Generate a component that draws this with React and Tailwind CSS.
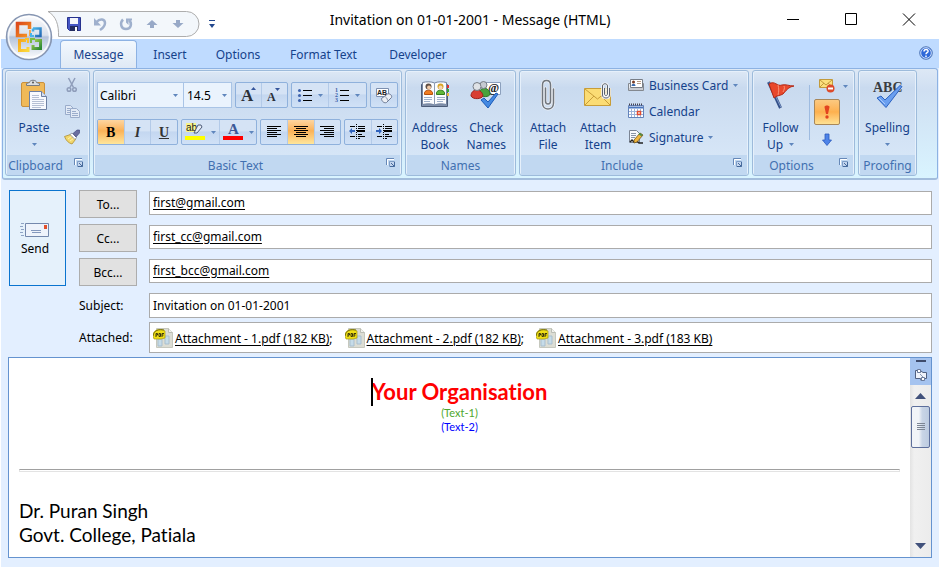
import React from "react";

function Caret({ className = "" }) {
  return (
    <svg className={className} width="5" height="3" viewBox="0 0 5 3" aria-hidden="true">
      <path d="M0 0h5L2.5 3z" fill="#5f86bd" />
    </svg>
  );
}

function Launcher({ label }) {
  return (
    <button aria-label={label} className="absolute right-[3px] top-[2px] h-3 w-3">
      <svg width="12" height="12" viewBox="0 0 12 12">
        <path d="M1.500 8V1.500H9" fill="none" stroke="#6688b8" />
        <path d="M2.500 8V2.500H9" fill="none" stroke="#fff" />
        <path d="M4.500 4.500h5v5h-5z" fill="#c3d5ee" stroke="#7e9dc6" />
        <path d="M5 9.500h4.500V5M6 6l3 3" fill="none" stroke="#466a9c" />
      </svg>
    </button>
  );
}

function Group({ name, width, launcher, children }) {
  return (
    <section
      aria-label={name}
      className={`${width} flex h-[106px] flex-col rounded-[3px] border border-[#9dbbdb] bg-linear-to-b from-[#dde8f5] from-0% via-[#c9daef] via-16% to-[#dae9f9] shadow-[inset_0_0_0_1px_#e6f0fb]`}
    >
      <div className="h-21 px-[3px]">{children}</div>
      <div className="relative mx-px flex h-5 items-center justify-center bg-[#c1d8f1] text-[#4170b0]">
        <span className={launcher ? "pr-6" : ""}>{name}</span>
        {launcher && <Launcher label={`${name} options`} />}
      </div>
    </section>
  );
}

function BigButton({ icon, lines, caret, width }) {
  return (
    <button className={`${width} flex flex-col items-center pt-2 leading-[17px]`}>
      <span className="mb-2 flex h-8 items-center">{icon}</span>
      <span>{lines[0]}</span>
      <span className="flex h-[17px] items-center gap-[6px]">
        {lines[1] && <span>{lines[1]}</span>}
        {caret && <Caret />}
      </span>
    </button>
  );
}

function ToolSet({ children, width }) {
  return (
    <div
      className={`${width} flex h-[26px] divide-x divide-[#b3cae8] overflow-hidden rounded-[2px] border border-[#8fb1dc] bg-linear-to-b from-[#d5e3f5] from-45% via-[#c4d7f0] via-50% to-[#d0e1f6]`}
    >
      {children}
    </div>
  );
}

function Tool({ label, active, caret, children }) {
  return (
    <button
      aria-label={label}
      aria-pressed={active}
      className={
        "flex flex-1 items-center justify-center gap-[6px] " +
        (active ? "bg-linear-to-b from-[#fdd5a0] via-[#fbb257] via-45% to-[#fee69b]" : "")
      }
    >
      {children}
      {caret && <Caret />}
    </button>
  );
}

const letter = { fontFamily: '"Liberation Serif", serif', fontWeight: 700 };

function Lines({ rows }) {
  return (
    <svg width="16" height="14" viewBox="0 0 16 14">
      {rows.map(([a, b], i) => (
        <path key={i} d={`M${a} ${i * 2 + 1.5}H${b}`} stroke="#000" />
      ))}
    </svg>
  );
}

function IndentIcon({ right }) {
  return (
    <svg width="17" height="16" viewBox="0 0 17 16">
      <path d="M1 2.500h5M9 2.500h7M9 4.500h7M9 10.500h4M1 12.500h5M9 12.500h7M9 14.500h2" stroke="#000" />
      <path d="M8 7h8" stroke="#000" strokeWidth="2" />
      <path d="M7.500 0v16" stroke="#000" strokeDasharray="1 1" />
      <path d={right ? "M6 7L3 4v2H0v2h3v2z" : "M0 7l3-3v2h3v2H3v2z"} fill="#2e62bd" />
    </svg>
  );
}

function ListIcon({ numbered }) {
  return (
    <svg width="14" height="16" viewBox="0 0 14 16" className="overflow-visible">
      <path d="M5 3.500h9M5 8.500h9M5 13.500h9" stroke="#000" />
      {numbered ? (
        <g fill="#3b5fa8" fontSize="6" style={letter}>
          <text x="0" y="5">1</text>
          <text x="0" y="10">2</text>
          <text x="0" y="15">3</text>
        </g>
      ) : (
        <g fill="#3e63ad">
          <circle cx="1.500" cy="3.500" r="1.500" />
          <circle cx="1.500" cy="8.500" r="1.500" />
          <circle cx="1.500" cy="13.500" r="1.500" />
        </g>
      )}
    </svg>
  );
}

function OfficeOrb() {
  return (
    <svg width="48" height="48" viewBox="0 0 48 48">
      <defs>
        <linearGradient id="orb" x1="0" y1="0" x2="0" y2="1">
          <stop offset="0" stopColor="#fdfdfe" />
          <stop offset=".46" stopColor="#d9e0ec" />
          <stop offset=".5" stopColor="#b4c3db" />
          <stop offset="1" stopColor="#fff" />
        </linearGradient>
        <linearGradient id="orange" x1="0" y1="0" x2="1" y2="1">
          <stop offset="0" stopColor="#dc4a1d" />
          <stop offset="1" stopColor="#f79622" />
        </linearGradient>
        <linearGradient id="blue" x1="0" y1="0" x2="1" y2="1">
          <stop offset="0" stopColor="#49b4e8" />
          <stop offset="1" stopColor="#2468b4" />
        </linearGradient>
        <linearGradient id="green" x1="0" y1="0" x2="1" y2="1">
          <stop offset="0" stopColor="#a3cf4c" />
          <stop offset="1" stopColor="#2d8a35" />
        </linearGradient>
        <linearGradient id="yellow" x1="0" y1="0" x2="1" y2="1">
          <stop offset="0" stopColor="#f7a71c" />
          <stop offset="1" stopColor="#fbd83c" />
        </linearGradient>
      </defs>
      <circle cx="24" cy="24" r="22.500" fill="url(#orb)" stroke="#8796b2" strokeWidth="1.500" />
      <circle cx="24" cy="24" r="20.500" fill="none" stroke="#fff" strokeWidth="1.500" opacity=".8" />
      <path d="M19 22.500h-6.500v-12h12V16M19 22.500h3" fill="none" stroke="url(#orange)" strokeWidth="3.500" />
      <path d="M28 15.500h7.500v7.500H30M28 15.500v3" fill="none" stroke="url(#blue)" strokeWidth="2.500" />
      <path d="M18 27.500h-3.500v10H23V34M18 27.500h3" fill="none" stroke="url(#yellow)" strokeWidth="3" />
      <path d="M30 27.500h5.500v8H28V32" fill="none" stroke="url(#green)" strokeWidth="3" />
      <path d="M25 17v6" stroke="#f79622" strokeWidth="1.500" />
      <path d="M26 20v3h3" fill="none" stroke="#49b4e8" strokeWidth="2" />
      <path d="M20 26h3v4" fill="none" stroke="#fbc12c" strokeWidth="2" />
      <path d="M26 30v-4h4" fill="none" stroke="#7cbc42" strokeWidth="2" />
    </svg>
  );
}

function PasteIcon() {
  return (
    <svg width="30" height="32" viewBox="0 0 30 32">
      <rect x="2.500" y="3.500" width="23" height="24" rx="1.500" fill="#f0b958" stroke="#c9903c" />
      <path d="M7.500 6.500v-2l3-1c0-3 7-3 7 0l3 1v2z" fill="#dadde1" stroke="#777c84" />
      <circle cx="14" cy="3.500" r="1" fill="#555" />
      <path d="M10.500 12.500h12l5 5v13h-17z" fill="#f8fafe" stroke="#6d80a3" />
      <path d="M22.500 12.500v5h5" fill="#d7e0f0" stroke="#6d80a3" />
      <path d="M13 16.500h7M13 18.500h7M13 20.500h12M13 22.500h12M13 24.500h12M13 26.500h12M13 28.500h9" stroke="#b6c0d4" />
    </svg>
  );
}

function CutIcon() {
  return (
    <svg width="16" height="16" viewBox="0 0 16 16" fill="none" stroke="#8f9dba">
      <path d="M4.500 1l5 9.500M11 1L6 10.500" strokeWidth="1.500" />
      <circle cx="5" cy="12.500" r="1.800" strokeWidth="1.500" />
      <circle cx="10.500" cy="12.500" r="1.800" strokeWidth="1.500" />
    </svg>
  );
}

function CopyIcon() {
  return (
    <svg width="16" height="16" viewBox="0 0 16 16" fill="#e2eaf6" stroke="#9aaccb">
      <path d="M1.500 2.500h5l3 3v6h-8z" />
      <path d="M3 5.500h3M3 7.500h3M3 9.500h3" />
      <path d="M6.500 5.500h6l3 3v6h-9z" />
      <path d="M8 8.500h4M8 10.500h6M8 12.500h6" />
    </svg>
  );
}

function BrushIcon() {
  return (
    <svg width="16" height="16" viewBox="0 0 16 16">
      <path d="M.5 7.500l6-2 5 5-3.500 4.500c-3.500-1-6-3.500-7.500-7.500z" fill="#f2d76c" stroke="#b08f32" strokeWidth=".8" />
      <path d="M4 10l4-3M6 12l4-3" stroke="#fff2b0" />
      <path d="M6 5.500L8 4l4.500 4.500-1.500 2z" fill="#fff" stroke="#777b8a" strokeWidth=".7" />
      <path d="M9 4.500L13 1h2.500v3L12 8z" fill="#6b6fa0" stroke="#39427a" strokeWidth=".6" />
    </svg>
  );
}

function AddressBookIcon() {
  return (
    <svg width="30" height="28" viewBox="0 0 30 28">
      <path d="M1.500 3.500h26v22h-26z" fill="#8090ab" stroke="#4c5c78" />
      <path d="M27 4h2v3h-2z" fill="#d33" />
      <path d="M27 8h2v3h-2z" fill="#3a3" />
      <path d="M27 12h2v3h-2z" fill="#e9b93a" />
      <path d="M2.500 1.500c4-1 9-1 12 .5 3-1.500 8-1.500 12-.5v22c-4-1-9-1-12 .5-3-1.500-8-1.500-12-.5z" fill="#fbfcfe" stroke="#7384a0" />
      <path d="M14.500 2v22" stroke="#8c9cb5" />
      <path d="M4.500 13.500v-2c1-3 7-3 8 0v2z" fill="#f07b20" stroke="#b4500c" />
      <circle cx="8.500" cy="5.500" r="3" fill="#604f45" />
      <circle cx="9" cy="6.500" r="2" fill="#f1c9a6" />
      <path d="M16.500 13.500v-2c1-3 7-3 8 0v2z" fill="#5fb83a" stroke="#337c1d" />
      <circle cx="20.500" cy="5.500" r="3" fill="#d8a526" />
      <circle cx="20.500" cy="6.500" r="2" fill="#f5d4b4" />
      <path d="M4 16.500h8M4 18.500h8M4 20.500h6M17 16.500h8M17 18.500h8M17 20.500h6" stroke="#9eb0cb" />
    </svg>
  );
}

function CheckNamesIcon() {
  return (
    <svg width="32" height="30" viewBox="0 0 32 30">
      <path d="M14.500 2.500h16v12h-16z" fill="#fff" stroke="#8ca0bd" />
      <text x="18" y="12" fontSize="12" fill="#222" style={letter}>@</text>
      <path d="M9 14c0-7 10-8 11 0 0 3-9 4-11 0z" fill="#49a23d" stroke="#2b7727" />
      <circle cx="13.500" cy="5" r="3.500" fill="#c6cbd2" stroke="#777d86" />
      <path d="M1 16c0-8 11-8 12 0-1 3-10 4-12 0z" fill="#d83e34" stroke="#9a211d" />
      <circle cx="7" cy="6.500" r="4" fill="#dfe2e6" stroke="#777d86" />
      <path d="M11 20l3-2 4 4 8-9 2 1-10 14z" fill="#4389e2" stroke="#1d5bb7" />
    </svg>
  );
}

function ClipIcon() {
  return (
    <svg width="14" height="32" viewBox="0 0 14 32" fill="none" strokeLinecap="round">
      <path d="M4.500 9v13c0 4 5 4 5 0V6c0-6-8-6-8 0v18c0 8 11 8 11 0V10" stroke="#eef2f7" strokeWidth="3" />
      <path d="M4.500 9v13c0 4 5 4 5 0V6c0-6-8-6-8 0v18c0 8 11 8 11 0V10" stroke="#71767d" strokeWidth="1.500" />
    </svg>
  );
}

function AttachItemIcon() {
  return (
    <svg width="30" height="30" viewBox="0 0 30 30">
      <path d="M1.500 8.500h26v17h-26z" fill="#fbdc74" stroke="#c89d38" />
      <path d="M2 25l9-9M27 25l-9-9M2 9l12.500 10L27 9" fill="none" stroke="#c89d38" />
      <path d="M21.500 8v6c0 2 3 2 3 0V6c0-3-5-3-5 0v9c0 4 7 4 7 0V8" fill="none" stroke="#f5f6f8" strokeWidth="2.500" />
      <path d="M21.500 8v6c0 2 3 2 3 0V6c0-3-5-3-5 0v9c0 4 7 4 7 0V8" fill="none" stroke="#5a626d" />
    </svg>
  );
}

function BusinessCardIcon() {
  return (
    <svg width="16" height="16" viewBox="0 0 16 16">
      <path d="M.5 6.500h15v7H.5z" fill="#e8eaee" stroke="#83888f" />
      <path d="M2.500 2.500h12v8h-12z" fill="#fff" stroke="#777d86" />
      <circle cx="5.500" cy="5" r="1.500" fill="#7a3c22" />
      <path d="M3.500 9c0-3 4-3 4 0z" fill="#3869ad" />
      <path d="M9 4.500h4M9 6.500h4" stroke="#b59a84" />
      <path d="M1 12h14" stroke="#c9ccd2" strokeWidth="2" />
    </svg>
  );
}

function CalendarIcon() {
  return (
    <svg width="16" height="16" viewBox="0 0 16 16">
      <path d="M.5 2.500h15v12H.5z" fill="#fff" stroke="#6383bb" />
      <path d="M1 4.500h14" stroke="#4876c0" strokeWidth="2" />
      <path d="M1 1.500h14" stroke="#445" strokeDasharray="1 1" strokeWidth="2" />
      <path d="M1 8.500h14M1 11.500h14M3.500 6v8M6.500 6v8M9.500 6v8M12.500 6v8" stroke="#9cb3da" />
      <path d="M9.500 8.500h3v3h-3z" fill="#fff" stroke="#e34b2f" strokeWidth="1.500" />
    </svg>
  );
}

function SignatureIcon() {
  return (
    <svg width="16" height="16" viewBox="0 0 16 16">
      <path d="M1.500 1.500h7l3 3v9h-10z" fill="#f9fafc" stroke="#7b8594" />
      <path d="M3 4.500h5M3 6.500h5M3 8.500h4" stroke="#8a94a5" />
      <path d="M2 13l2-2 2 2 3-1 2 2h4" fill="none" stroke="#222" strokeWidth="1.500" />
      <path d="M6 11l6-7 3 2-6 7-3 1z" fill="#f1b63c" stroke="#70541a" strokeWidth=".8" />
      <path d="M11 4.500l3 2" stroke="#4a8b48" strokeWidth="2" />
    </svg>
  );
}

function FlagIcon() {
  return (
    <svg width="30" height="30" viewBox="0 0 30 30">
      <path d="M2.500 2l12 26" stroke="#33508a" strokeWidth="3" />
      <path d="M3 2.500l12 25" stroke="#7d97c4" />
      <path d="M3 4c6-4 8 3 13 1 4-1 7 1 12 1-6 1-8 5-11 8-3 2-6 1-9 4z" fill="#e9482c" stroke="#b32a18" />
      <path d="M12 5c1 4 1 6 0 10M18 6c1 2 0 4-1 6" fill="none" stroke="#fa9477" />
    </svg>
  );
}

function PermissionIcon() {
  return (
    <svg width="16" height="14" viewBox="0 0 16 14">
      <path d="M.5.500h13v8H.5z" fill="#fbe07c" stroke="#c29a3c" />
      <path d="M1 1l6 5 6-5M1 8l4-4M13 8L9 4" fill="none" stroke="#c29a3c" />
      <circle cx="11.500" cy="9.500" r="4" fill="#dd4a2b" />
      <path d="M9 9.500h5" stroke="#fff" strokeWidth="2" />
    </svg>
  );
}

function SpellingIcon() {
  return (
    <svg width="32" height="32" viewBox="0 0 32 32">
      <text x="1" y="13" fontSize="14" fill="#3a3d42" style={letter}>ABC</text>
      <path d="M5 19l4-2 4 4L28 6.500l2 1L14 28.500z" fill="#6a9ff0" stroke="#2c62c0" />
      <path d="M7 19l6 6" stroke="#a9c9fb" />
    </svg>
  );
}

function SendIcon() {
  return (
    <svg width="30" height="16" viewBox="0 0 30 16">
      <path d="M5.500 1.500h23v13h-23z" fill="#eef3fb" stroke="#7488ac" />
      <path d="M11 8.500h10M12 10.500h9" stroke="#8498bd" />
      <path d="M24 3h3v4h-3z" fill="#e2512c" />
      <path d="M1 1.500h3M0 4.500h3M1 7.500h3M0 10.500h3M1 13.500h3" stroke="#8fa3c4" />
    </svg>
  );
}

function PdfIcon() {
  return (
    <svg width="20" height="20" viewBox="0 0 20 20" className="shrink-0">
      <path d="M3.500.500h12l4 4v15h-16z" fill="#dcddd4" stroke="#c6c8be" />
      <path d="M15.500.500v4h4" fill="#f2f2ee" stroke="#bbbdb4" />
      <path d="M5 11h4v7H5zM12 8h4v8h-4z" fill="#c6dce9" stroke="#a9bfce" />
      <path d="M0 8c0-8 9-7 12-5v7l-4 1H3l-2 0z" fill="#f0df16" stroke="#a89b10" strokeWidth=".7" />
      <path d="M0 8c1-6 6-7 11-6" fill="none" stroke="#77700c" />
      <path d="M3 9V5.500h1.500V7H3M6 5.500v3h1.500v-3zM9 9V5.500h2M9 7h1.500" fill="none" stroke="#3a370a" />
    </svg>
  );
}

const tabs = ["Insert", "Options", "Format Text", "Developer"];
const tabWidths = ["w-[68px]", "w-[68px]", "w-[103px]", "w-[86px]"];
const recipients = [
  { button: "To...", value: "first@gmail.com" },
  { button: "Cc...", value: "first_cc@gmail.com" },
  { button: "Bcc...", value: "first_bcc@gmail.com" },
];
const files = ["Attachment - 1.pdf (182 KB)", "Attachment - 2.pdf (182 KB)", "Attachment - 3.pdf (183 KB)"];

function TitleBar() {
  return (
    <header className="relative flex h-[39px] items-center bg-white">
      <svg className="mb-px ml-[47px] self-end" width="153" height="28" viewBox="0 0 153 28" aria-hidden="true">
        <path d="M0 1.500h138.500a12.500 12.500 0 0 1 0 25H10.500C11 15 8 6 0 1.500z" fill="#f3f7fb" stroke="#adadad" />
      </svg>
      <div className="absolute left-[65px] top-4 flex gap-[10px]">
        <button aria-label="Save">
          <svg width="16" height="16" viewBox="0 0 16 16">
            <path d="M1.500 1.500h13v13h-11l-2-2z" fill="#4556c4" stroke="#27328e" />
            <path d="M4 2h8v6H4z" fill="#f4f6fb" />
            <path d="M4 10h8v5H4z" fill="#222b60" />
            <path d="M9 11h2v4H9z" fill="#fff" />
          </svg>
        </button>
        <button aria-label="Undo">
          <svg width="16" height="16" viewBox="0 0 16 16">
            <path d="M4.500 6C8 2 13 3 13 7c0 3-2 5-5 7" fill="none" stroke="#9fb0cd" strokeWidth="2.500" />
            <path d="M2 2v7.500h7z" fill="#9fb0cd" />
          </svg>
        </button>
        <button aria-label="Redo">
          <svg width="16" height="16" viewBox="0 0 16 16">
            <path d="M5 3.500C1.500 7 3 13 8 13s6.500-5.500 3-9" fill="none" stroke="#9fb0cd" strokeWidth="2.500" />
            <path d="M8 2.500h6v2h-3.500V9L8 6.500z" fill="#9fb0cd" />
          </svg>
        </button>
        <button aria-label="Previous item">
          <svg width="16" height="16" viewBox="0 0 16 16">
            <path d="M8 4l5.500 5H10v3H6V9H2.500z" fill="#98a9c7" />
          </svg>
        </button>
        <button aria-label="Next item">
          <svg width="16" height="16" viewBox="0 0 16 16">
            <path d="M8 12l5.500-5H10V4H6v3H2.500z" fill="#98a9c7" />
          </svg>
        </button>
        <button aria-label="Customise toolbar" className="ml-3">
          <svg width="8" height="16" viewBox="0 0 8 16">
            <path d="M1 4.500h6" stroke="#23488e" />
            <path d="M1 8h6l-3 4z" fill="#23488e" />
          </svg>
        </button>
      </div>
      <h1 className="absolute inset-x-0 top-[10px] text-center text-[14px] leading-[20px] text-black">
        Invitation on 01-01-2001 - Message (HTML)
      </h1>
      <div className="relative ml-auto flex gap-[42px] pr-[22px]">
        {[
          ["Minimise", "M2 7.500h12"],
          ["Maximise", "M2.500 1.500h11v11h-11z"],
          ["Close", "M2 1.500l12 12M14 1.500l-12 12"],
        ].map(([label, d]) => (
          <button key={label} aria-label={label}>
            <svg width="16" height="16" viewBox="0 0 16 16">
              <path d={d} fill="none" stroke="#000" />
            </svg>
          </button>
        ))}
      </div>
      <button aria-label="Office menu" className="absolute left-1 top-[13px] z-10">
        <OfficeOrb />
      </button>
    </header>
  );
}

function TabBar() {
  return (
    <nav className="flex h-[29px] items-end bg-[#bfdbff] pl-[59px] pr-[6px] text-[#15428b]">
      <button className="z-10 h-[28px] w-[77px] rounded-t-[4px] border border-b-0 border-[#8db2e3] bg-linear-to-b from-[#f2f8fe] to-[#dfe9f5]">
        Message
      </button>
      {tabs.map((tab, i) => (
        <button key={tab} className={`${tabWidths[i]} h-[28px] pr-[2px]`}>
          {tab}
        </button>
      ))}
      <button aria-label="Help" className="mb-2 ml-auto">
        <svg width="14" height="14" viewBox="0 0 14 14">
          <circle cx="7" cy="7" r="6.300" fill="#2e68d8" stroke="#5b7fb8" />
          <circle cx="7" cy="7" r="5.300" fill="none" stroke="#cfe0fa" />
          <path d="M5 5.500c0-3 4.500-2.500 4 0-.3 1.200-2 1.300-2 2.700M7 9.500V11" fill="none" stroke="#fff" strokeWidth="1.500" />
        </svg>
      </button>
    </nav>
  );
}

function Ribbon() {
  return (
    <div className="mx-px flex h-[112px] gap-[3px] rounded-[3px] border border-b-2 border-[#8db2e3] border-b-[#a3bddc] bg-linear-to-b from-[#dde8f5] via-[#cfdff2] via-20% to-[#d9f4ff] px-[2px] pt-px text-[#15428b]">
      <Group name="Clipboard" width="w-[85px]" launcher>
        <div className="flex">
          <BigButton width="w-[50px]" icon={<PasteIcon />} lines={["Paste"]} caret />
          <div className="flex flex-col gap-[10px] pl-[5px] pt-[6px]">
            <button aria-label="Cut"><CutIcon /></button>
            <button aria-label="Copy"><CopyIcon /></button>
            <button aria-label="Format painter"><BrushIcon /></button>
          </div>
        </div>
      </Group>

      <Group name="Basic Text" width="w-[309px]" launcher>
        <div className="flex gap-[3px] pt-[11px]">
          <div className="flex text-black">
            <label className="relative flex items-center">
              <select aria-label="Font" className="h-[26px] w-[87px] appearance-none border border-[#a9c4e6] bg-[#eaf3fd] px-[2px]">
                <option>Calibri</option>
              </select>
              <Caret className="pointer-events-none absolute right-[6px]" />
            </label>
            <label className="relative flex items-center">
              <select aria-label="Font size" className="h-[26px] w-[48px] appearance-none border border-l-0 border-[#a9c4e6] bg-[#eaf3fd] px-[3px]">
                <option>14.5</option>
              </select>
              <Caret className="pointer-events-none absolute right-[5px]" />
            </label>
          </div>
          <ToolSet width="w-[53px]">
            <Tool label="Grow font">
              <svg width="16" height="18" viewBox="0 0 16 18" className="overflow-visible">
                <text x="1" y="15" fontSize="17" fill="#2b3038" style={letter}>A</text>
                <path d="M11 4h5l-2.500-3z" fill="#35559b" />
              </svg>
            </Tool>
            <Tool label="Shrink font">
              <svg width="16" height="18" viewBox="0 0 16 18" className="overflow-visible">
                <text x="1" y="15" fontSize="12" fill="#2b3038" style={letter}>A</text>
                <path d="M9 2h5l-2.500 3z" fill="#35559b" />
              </svg>
            </Tool>
          </ToolSet>
          <ToolSet width="w-[77px]">
            <Tool label="Bullets" caret><ListIcon /></Tool>
            <Tool label="Numbering" caret><ListIcon numbered /></Tool>
          </ToolSet>
          <ToolSet width="w-[28px]">
            <Tool label="Clear formatting">
              <svg width="18" height="18" viewBox="0 0 18 18">
                <path d="M1.500 2.500h12v8h-12z" fill="#fff" stroke="#7c8faf" />
                <text x="2" y="9" fontSize="7" fontWeight="700" fill="#222" fontFamily="Liberation Sans, sans-serif">AB</text>
                <path d="M6.500 12.500l6-4.500c2-1 5 1.500 4 3.500l-5 5c-2 1-5-1-5-4z" fill="#edf0f5" stroke="#6c7993" />
                <path d="M9 10.500c2 0 3.500 2 3.500 4" fill="none" stroke="#8b96ab" />
              </svg>
            </Tool>
          </ToolSet>
        </div>
        <div className="flex gap-[3px] pt-[11px]">
          <ToolSet width="w-[81px]">
            <Tool label="Bold" active>
              <span className="font-['Liberation_Serif',serif] text-[14px] font-bold text-black">B</span>
            </Tool>
            <Tool label="Italic">
              <span className="font-['Liberation_Serif',serif] text-[14px] font-bold italic text-[#333]">I</span>
            </Tool>
            <Tool label="Underline">
              <span className="font-['Liberation_Serif',serif] text-[14px] font-bold text-[#333] underline">U</span>
            </Tool>
          </ToolSet>
          <ToolSet width="w-[77px]">
            <Tool label="Highlight" caret>
              <svg width="20" height="20" viewBox="0 0 20 20" className="overflow-visible">
                <path d="M1 1h10v9H1z" fill="#f7f38b" />
                <text x="1" y="9" fontSize="10" fill="#222" fontFamily="Liberation Sans, sans-serif">ab</text>
                <path d="M9 11l4-8h3l1 2-5 6z" fill="#e6ecf6" stroke="#4d5c78" />
                <path d="M0 14h20v4H0z" fill="#ff0" />
              </svg>
            </Tool>
            <Tool label="Font colour" caret>
              <svg width="20" height="20" viewBox="0 0 20 20" className="overflow-visible">
                <text x="5" y="12" fontSize="15" fill="#3b5998" style={letter}>A</text>
                <path d="M0 14h20v4H0z" fill="#f00" />
              </svg>
            </Tool>
          </ToolSet>
          <ToolSet width="w-[81px]">
            <Tool label="Align left">
              <Lines rows={[[1, 15], [1, 11], [1, 15], [1, 11], [1, 15], [1, 11]]} />
            </Tool>
            <Tool label="Centre" active>
              <Lines rows={[[1, 15], [3, 13], [1, 15], [3, 13], [1, 15], [3, 13]]} />
            </Tool>
            <Tool label="Align right">
              <Lines rows={[[1, 15], [5, 15], [1, 15], [5, 15], [1, 15], [5, 15]]} />
            </Tool>
          </ToolSet>
          <ToolSet width="w-[54px]">
            <Tool label="Decrease indent"><IndentIcon /></Tool>
            <Tool label="Increase indent"><IndentIcon right /></Tool>
          </ToolSet>
        </div>
      </Group>

      <Group name="Names" width="w-[111px]">
        <div className="flex">
          <BigButton width="w-[52px]" icon={<AddressBookIcon />} lines={["Address", "Book"]} />
          <BigButton width="w-[52px]" icon={<CheckNamesIcon />} lines={["Check", "Names"]} />
        </div>
      </Group>

      <Group name="Include" width="w-[230px]" launcher>
        <div className="flex">
          <BigButton width="w-[50px]" icon={<ClipIcon />} lines={["Attach", "File"]} />
          <BigButton width="w-[50px]" icon={<AttachItemIcon />} lines={["Attach", "Item"]} />
          <div className="flex flex-col pl-[5px] pt-px">
            {[
              ["Business Card", <BusinessCardIcon />, true],
              ["Calendar", <CalendarIcon />, false],
              ["Signature", <SignatureIcon />, true],
            ].map(([text, icon, caret]) => (
              <button key={text} className="flex h-[26px] items-center gap-[5px] whitespace-nowrap">
                {icon}
                {text}
                {caret && <Caret />}
              </button>
            ))}
          </div>
        </div>
      </Group>

      <Group name="Options" width="w-[103px]" launcher>
        <div className="flex">
          <BigButton width="w-[49px]" icon={<FlagIcon />} lines={["Follow", "Up"]} caret />
          <div className="ml-1 mt-[14px] h-[55px] w-px bg-[#9ebbe0]" />
          <div className="flex flex-col items-start gap-[6px] pl-1 pt-2">
            <button aria-label="Permission" className="flex items-center gap-2 pl-[5px]">
              <PermissionIcon />
              <Caret />
            </button>
            <button
              aria-label="High importance"
              aria-pressed="true"
              className="flex h-[26px] w-[26px] items-center justify-center rounded-[2px] border border-[#a8875a] bg-linear-to-b from-[#fbc980] via-[#fdb04e] via-50% to-[#fee193]"
            >
              <svg width="8" height="14" viewBox="0 0 8 14">
                <path d="M1.500 2c0-2 5-2 5 0L5 9H3z" fill="#e2431f" />
                <circle cx="4" cy="12" r="1.700" fill="#e2431f" />
              </svg>
            </button>
            <button aria-label="Low importance" className="pl-2 pt-[2px]">
              <svg width="10" height="14" viewBox="0 0 10 14">
                <path d="M3 1h4v6h2.500L5 12.500.5 7H3z" fill="#4d83e8" stroke="#2c5cbc" strokeWidth=".8" />
              </svg>
            </button>
          </div>
        </div>
      </Group>

      <Group name="Proofing" width="w-[59px]">
        <BigButton width="w-[51px]" icon={<SpellingIcon />} lines={["Spelling"]} caret />
      </Group>
    </div>
  );
}

function Scrollbar() {
  return (
    <div className="flex w-[21px] flex-col items-center bg-linear-to-r from-[#e3e3e3] via-[#f0f0f0] via-20% to-[#ececec]">
      <button aria-label="Browse object" className="flex h-[27px] w-full items-center justify-center bg-[#a5c3ef]">
        <svg width="14" height="23" viewBox="0 0 14 23">
          <path d="M2 1h10" stroke="#3e4b6c" strokeWidth="2" />
          <path d="M1.500 10.500H3l1 2h2l1-1.500 2 1.500h3.500v6H10l-.5 2H7l-.5-2h-5z" fill="#eef2fa" stroke="#4f5f80" />
          <path d="M3.500 9.500h3v3h-3zM7.500 17.500h3v3h-3z" fill="#fff" stroke="#6a7a9b" />
          <path d="M6 14l3 3" stroke="#8b9ab5" />
        </svg>
      </button>
      <button aria-label="Scroll up" className="flex h-[21px] items-center">
        <svg width="11" height="6" viewBox="0 0 11 6"><path d="M0 6h11L5.500 0z" fill="#41517b" /></svg>
      </button>
      <div className="flex h-[42px] w-[19px] items-center justify-center rounded-[2px] border border-[#5d6f9c] bg-linear-to-r from-[#f1f4f8] from-40% via-[#c9d5e6] via-60% to-[#bccbe0]">
        <svg width="8" height="8" viewBox="0 0 8 8">
          <path d="M0 .5h8M0 2.500h8M0 4.500h8M0 6.500h8" stroke="#7d8694" />
        </svg>
      </div>
      <button aria-label="Scroll down" className="mt-auto flex h-[22px] items-center">
        <svg width="11" height="6" viewBox="0 0 11 6"><path d="M0 0h11L5.500 6z" fill="#41517b" /></svg>
      </button>
    </div>
  );
}

export default function App() {
  return (
    <div className="flex min-h-screen flex-col border border-t-0 border-white bg-[#e3efff] font-['Noto_Sans',sans-serif] text-[12px] leading-[17px] text-black">
      <TitleBar />
      <TabBar />
      <Ribbon />

      <form className="flex pl-2 pr-[7px] pt-[10px]">
        <button
          type="button"
          className="flex h-24 w-[57px] flex-col items-center justify-center gap-[2px] border border-[#0a74cf] bg-[#e5f1fb] pr-[5px] pt-[2px]"
        >
          <SendIcon />
          Send
        </button>
        <div className="ml-[13px] flex flex-1 flex-col">
          {recipients.map(({ button, value }) => (
            <div key={button} className="mb-[6px] flex items-start gap-3">
              <button type="button" className="h-7 w-[58px] border border-[#adadad] bg-[#e1e1e1]">
                {button}
              </button>
              <input
                aria-label={button}
                defaultValue={value}
                className="mt-px h-6 flex-1 border border-[#ababab] bg-white px-[3px] pb-[2px] underline underline-offset-2"
              />
            </div>
          ))}
          <div className="mb-1 mt-px flex items-center">
            <label htmlFor="subject" className="w-[70px]">Subject:</label>
            <input
              id="subject"
              defaultValue="Invitation on 01-01-2001"
              className="h-[25px] flex-1 border border-[#ababab] bg-white px-[3px]"
            />
          </div>
          <div className="flex items-center">
            <span className="w-[70px]">Attached:</span>
            <div className="flex h-[31px] flex-1 items-center gap-3 border border-[#ababab] bg-white px-[3px]">
              {files.map((file, i) => (
                <span key={file} className="flex items-center gap-[2px]">
                  <PdfIcon />
                  <span className="pt-[2px]">
                    <a href="#" className="underline underline-offset-2">{file}</a>
                    {i < files.length - 1 && ";"}
                  </span>
                </span>
              ))}
            </div>
          </div>
        </div>
      </form>

      <main className="mx-[7px] mb-[9px] mt-1 flex flex-1 border border-[#6593cf] bg-white">
        <article className="flex-1 px-[10px] pt-5 font-[Lato,sans-serif] [font-variant-ligatures:none]">
          <div className="text-center">
            <h2 className="text-[22px] font-bold leading-[28px] text-[#f00]">
              <span className="relative">
                <span className="absolute -left-px top-0 h-[28px] w-[2px] bg-black" />
                Your Organisation
              </span>
            </h2>
            <p className="text-[11px] leading-[14px] text-[#4ea72e]">(Text-1)</p>
            <p className="text-[11px] leading-[14px] text-[#00f]">(Text-2)</p>
          </div>
          <hr className="mt-[35px] h-[3px] border border-[#e3e3e3] border-t-[#a0a0a0]" />
          <p className="mt-[27px] text-[19px] leading-[24px]">
            Dr. Puran Singh
            <br />
            Govt. College, Patiala
          </p>
        </article>
        <Scrollbar />
      </main>
    </div>
  );
}
